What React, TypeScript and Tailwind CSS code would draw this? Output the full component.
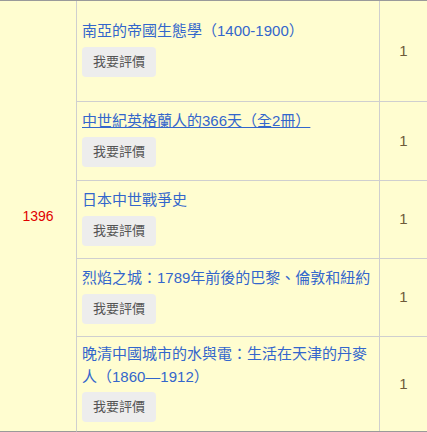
const FONT = '"Liberation Sans", "Noto Sans CJK TC", sans-serif';

interface BookRow {
  title: string;
  qty: number;
  height: string;
  pad: string;
  leading: string;
  btnGap: string;
  underline?: boolean;
  last?: boolean;
}

const rows: BookRow[] = [
  { title: '南亞的帝國生態學（1400-1900）', qty: 1, height: 'h-[101px]', pad: 'pt-[20px]', leading: 'leading-[20px]', btnGap: 'mt-[6px]' },
  { title: '中世紀英格蘭人的366天（全2冊）', qty: 1, height: 'h-[79px]', pad: 'pt-[9px]', leading: 'leading-[20px]', btnGap: 'mt-[6px]', underline: true },
  { title: '日本中世戰爭史', qty: 1, height: 'h-[78px]', pad: 'pt-[9px]', leading: 'leading-[20px]', btnGap: 'mt-[6px]' },
  { title: '烈焰之城：1789年前後的巴黎、倫敦和紐約', qty: 1, height: 'h-[78px]', pad: 'pt-[9px]', leading: 'leading-[20px]', btnGap: 'mt-[6px]' },
  { title: '晚清中國城市的水與電：生活在天津的丹麥人（1860—1912）', qty: 1, height: 'h-[95px]', pad: 'pt-[5px]', leading: 'leading-[23px]', btnGap: 'mt-[4px]', last: true },
];

export default function App() {
  return (
    <div
      className="w-[427px] h-[432px] bg-[#fffdd0] border-t border-[#9a9a9a] flex overflow-hidden"
      style={{ fontFamily: FONT }}
    >
      <div className="w-[77px] shrink-0 border-r border-[#cfcfcf] border-b border-b-[#9a9a9a] flex items-center justify-center">
        <span className="text-[14px] text-[#e00000]">1396</span>
      </div>
      <div className="flex-1 flex flex-col">
        {rows.map((row, i) => (
          <div
            key={i}
            className={`flex ${row.height} border-b ${row.last ? 'border-[#9a9a9a]' : 'border-[#cfcfcf]'}`}
          >
            <div className={`w-[303px] shrink-0 border-r border-[#cfcfcf] px-[5px] ${row.pad}`}>
              <div className={`text-[15px] ${row.leading} text-[#3366cc] ${row.underline ? 'underline' : ''}`}>
                {row.title}
              </div>
              <button
                className={`${row.btnGap} w-[74px] h-[30px] rounded-[4px] bg-[#ededed] text-[13px] text-[#555555] flex items-center justify-center`}
              >
                我要評價
              </button>
            </div>
            <div className="flex-1 flex items-center justify-center">
              <span className="text-[15px] text-[#6e5a3a]">{row.qty}</span>
            </div>
          </div>
        ))}
      </div>
    </div>
  );
}
